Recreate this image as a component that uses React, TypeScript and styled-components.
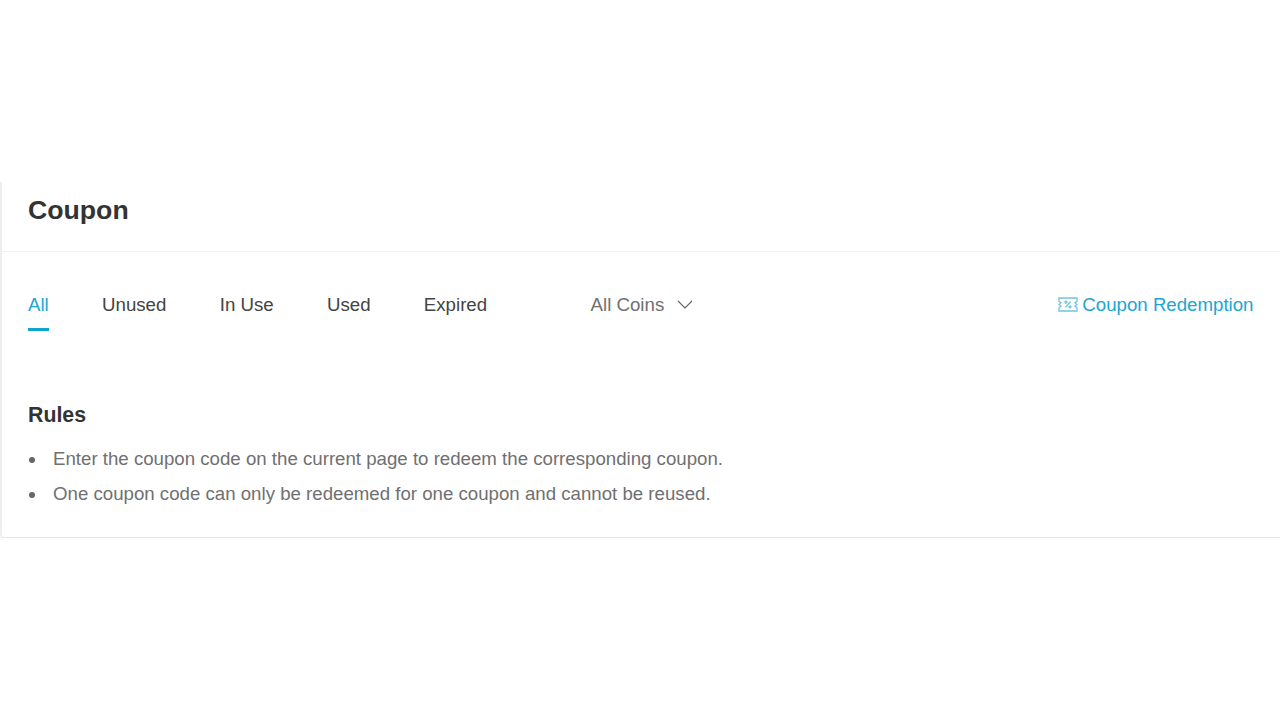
import React from "react";
import styled, { createGlobalStyle } from "styled-components";

const GlobalStyle = createGlobalStyle`
  html, body {
    margin: 0;
    padding: 0;
    background: #fff;
    font-family: "Liberation Sans", Arial, sans-serif;
  }
`;

const Page = styled.div`
  height: 720px;
  padding-top: 182px;
  box-sizing: border-box;
  overflow: hidden;
`;

const Card = styled.section`
  height: 356px;
  box-sizing: border-box;
  border-left: 2px solid #eeeeee;
  border-bottom: 1px solid #e6e6e6;
  border-bottom-left-radius: 3px;
`;

const Header = styled.header`
  height: 70px;
  box-sizing: border-box;
  padding-left: 26px;
  border-bottom: 1px solid #f2f2f6;
  display: flex;
  align-items: center;
`;

const Title = styled.h1`
  margin: 0 0 14px;
  font-size: 26.67px;
  line-height: 32px;
  font-weight: 700;
  color: #333333;
`;

const Toolbar = styled.div`
  height: 79px;
  padding: 0 26.5px 0 26px;
  display: flex;
  align-items: flex-start;
`;

const Tabs = styled.nav`
  display: flex;
  gap: 53.33px;
`;

const Tab = styled.a<{ $active?: boolean }>`
  height: 79px;
  box-sizing: border-box;
  padding-top: 39px;
  font-size: 18.67px;
  line-height: 27px;
  color: ${(p) => (p.$active ? "#1ba6cf" : "#444444")};
  border-bottom: 3px solid ${(p) => (p.$active ? "#0ea5cf" : "transparent")};
`;

const CoinSelect = styled.div`
  margin-left: 103.5px;
  padding-top: 39px;
  display: flex;
  align-items: flex-start;
  gap: 13px;
  font-size: 18.67px;
  line-height: 27px;
  color: #707070;
`;

const Chevron = styled.svg`
  width: 16px;
  height: 27px;
  display: block;
`;

const Redeem = styled.a`
  margin-left: auto;
  padding-top: 39px;
  display: flex;
  align-items: flex-start;
  gap: 4px;
  font-size: 18.67px;
  line-height: 27px;
  color: #1ba6cf;
`;

const TicketIcon = styled.svg`
  width: 20px;
  height: 27px;
  display: block;
`;

const Rules = styled.div`
  padding: 70px 26px 0;
`;

const RulesTitle = styled.h2`
  margin: 0 0 13px;
  font-size: 21.33px;
  line-height: 28px;
  font-weight: 700;
  color: #333333;
`;

const RulesList = styled.ul`
  margin: 0;
  padding: 0;
  list-style: none;
`;

const RuleItem = styled.li`
  position: relative;
  padding-left: 25px;
  font-size: 18.67px;
  line-height: 34.67px;
  color: #707070;

  &::before {
    content: "";
    position: absolute;
    left: 0.5px;
    top: 15px;
    width: 6px;
    height: 6px;
    border-radius: 50%;
    background: #666666;
  }
`;

export default function App() {
  return (
    <Page>
      <GlobalStyle />
      <Card>
        <Header>
          <Title>Coupon</Title>
        </Header>
        <Toolbar>
          <Tabs>
            <Tab $active>All</Tab>
            <Tab>Unused</Tab>
            <Tab>In Use</Tab>
            <Tab>Used</Tab>
            <Tab>Expired</Tab>
          </Tabs>
          <CoinSelect>
            All Coins
            <Chevron viewBox="0 0 16 27" fill="none" stroke="#666666" strokeWidth="1.2">
              <path d="M1 10l7 7 7-7" />
            </Chevron>
          </CoinSelect>
          <Redeem>
            <TicketIcon viewBox="0 0 20 27" fill="none" stroke="#6cc6e0" strokeWidth="1.3">
              <path d="M1 7h18v3.2l-2 1.6 2 1.7-2 1.7 2 1.6V20H1v-3.2l2-1.6-2-1.7 2-1.7-2-1.6z" />
              <path d="M7.5 16.2l5-5.4" />
              <circle cx="8" cy="11.2" r="1" />
              <circle cx="12" cy="15.8" r="1" />
            </TicketIcon>
            Coupon Redemption
          </Redeem>
        </Toolbar>
        <Rules>
          <RulesTitle>Rules</RulesTitle>
          <RulesList>
            <RuleItem>Enter the coupon code on the current page to redeem the corresponding coupon.</RuleItem>
            <RuleItem>One coupon code can only be redeemed for one coupon and cannot be reused.</RuleItem>
          </RulesList>
        </Rules>
      </Card>
    </Page>
  );
}
